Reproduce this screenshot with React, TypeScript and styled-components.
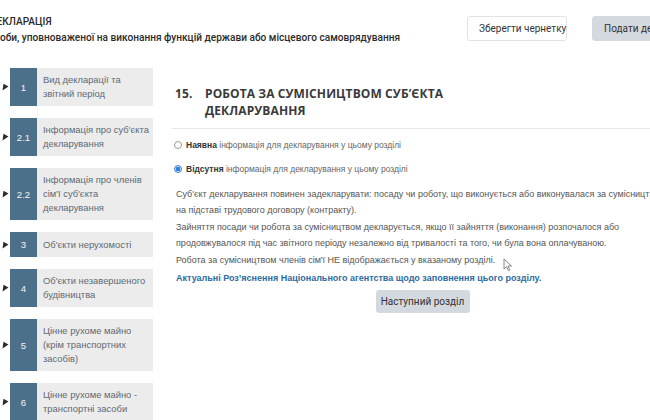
import React from "react";
import styled, { createGlobalStyle } from "styled-components";

const Global = createGlobalStyle`
  html, body { margin: 0; padding: 0; background: #fff; }
  body { width: 650px; height: 420px; overflow: hidden; font-family: "Liberation Sans", Arial, sans-serif; }
`;

const Page = styled.div`
  width: 650px;
  height: 420px;
  overflow: hidden;
  position: relative;
`;

const Header = styled.header`
  display: flex;
  align-items: center;
  height: 56px;
  width: 720px;
`;

const HeadTitle = styled.div`
  flex: 1;
  margin-left: -11px;
  font-family: Roboto, "Liberation Sans", sans-serif;
  font-weight: 500;
  color: #2b2b2b;
  font-size: 10.1px;
  line-height: 16px;
  padding-top: 4px;
  white-space: nowrap;
`;

const HeadActions = styled.div`
  display: flex;
  gap: 25px;
  align-items: center;
`;

const TopButton = styled.button<{ $primary?: boolean }>`
  height: 25px;
  padding: 0 11px;
  border-radius: 3px;
  font-family: Roboto, "Liberation Sans", sans-serif;
  font-size: 10px;
  color: #333;
  white-space: nowrap;
  border: 1px solid ${(p) => (p.$primary ? "#d3d9de" : "#e3e3e3")};
  background: ${(p) => (p.$primary ? "#d3d9de" : "#fff")};
  width: ${(p) => (p.$primary ? "128px" : "100px")};
  text-align: ${(p) => (p.$primary ? "left" : "center")};
`;

const Body = styled.div`
  display: flex;
  gap: 19px;
  margin-top: 12px;
`;

const Sidebar = styled.nav`
  width: 153px;
  display: flex;
  flex-direction: column;
  gap: 12px;
  flex-shrink: 0;
`;

const Item = styled.div`
  display: flex;
  align-items: stretch;
`;

const Marker = styled.div`
  width: 10px;
  display: flex;
  align-items: center;
  padding-left: 2px;
  box-sizing: border-box;
`;

const Num = styled.div`
  width: 27px;
  background: #4c7089;
  color: #f2f5f7;
  font-size: 9.6px;
  display: flex;
  align-items: center;
  justify-content: center;
`;

const Label = styled.div`
  flex: 1;
  background: #ececec;
  color: #5d6a74;
  font-size: 9.4px;
  line-height: 14px;
  padding: 5px 2px 5px 6px;
  min-height: 15px;
  display: flex;
  align-items: center;
`;

const Main = styled.main`
  width: 520px;
  flex-shrink: 0;
`;

const TitleRow = styled.div`
  display: flex;
  align-items: flex-start;
  justify-content: space-between;
  border-bottom: 1px solid #e6e6e6;
  padding: 19px 0 9px 3px;
  margin-top: -2px;
`;

const Title = styled.h2`
  margin: 0;
  display: flex;
  font-family: "Open Sans", sans-serif;
  font-weight: 700;
  font-size: 12px;
  line-height: 17px;
  color: #3a3a3a;
  letter-spacing: 0.1px;
`;

const TitleNum = styled.span`
  width: 30px;
  flex-shrink: 0;
`;

const SideButton = styled.div`
  width: 30px;
  height: 22px;
  margin-top: -9px;
  margin-right: 2px;
  border: 1px solid #e0e0e0;
  border-radius: 3px;
`;

const Radios = styled.div`
  display: flex;
  flex-direction: column;
  gap: 10px;
  margin-top: 9px;
  padding-left: 2px;
`;

const RadioRow = styled.label`
  display: flex;
  align-items: center;
  gap: 4px;
  font-size: 8.5px;
  color: #666;
  height: 14px;
`;

const RadioDot = styled.span<{ $checked?: boolean }>`
  width: 6px;
  height: 6px;
  border-radius: 50%;
  border: 1px solid ${(p) => (p.$checked ? "#3d85d6" : "#9a9a9a")};
  background: ${(p) => (p.$checked ? "radial-gradient(circle, #2f7fdc 0 2px, #cfe2f7 2.5px)" : "#fff")};
  flex-shrink: 0;
`;

const Strong = styled.b`
  color: #333;
  font-weight: 700;
`;

const Text = styled.div`
  margin-top: 11px;
  padding-left: 4px;
  font-size: 9px;
  line-height: 15.5px;
  color: #555;
  white-space: nowrap;
`;

const Para = styled.p`
  margin: 0 0 2px;
`;

const Link = styled.a`
  display: block;
  margin-top: 0;
  color: #2e6aa1;
  font-weight: 700;
  text-decoration: none;
`;

const Center = styled.div`
  width: 501px;
  display: flex;
  justify-content: center;
  margin-top: 4px;
`;

const NextButton = styled.button`
  background: #d3d9de;
  border: none;
  border-radius: 3px;
  height: 23px;
  width: 94px;
  padding: 0;
  white-space: nowrap;
  font-family: Roboto, "Liberation Sans", sans-serif;
  font-size: 10px;
  color: #333;
`;

const Cursor = styled.svg`
  position: absolute;
  left: 503px;
  top: 258px;
`;

const Arrow = () => (
  <svg width="7" height="8" viewBox="0 0 7 8">
    <path d="M0.5 7.5 L6.5 3.5 L1.5 0.8 Z" fill="#2b2b2b" />
  </svg>
);

const items: { n: string; label: string }[] = [
  { n: "1", label: "Вид декларації та звітний період" },
  { n: "2.1", label: "Інформація про суб'єкта декларування" },
  { n: "2.2", label: "Інформація про членів сім'ї суб'єкта декларування" },
  { n: "3", label: "Об'єкти нерухомості" },
  { n: "4", label: "Об'єкти незавершеного будівництва" },
  { n: "5", label: "Цінне рухоме майно (крім транспортних засобів)" },
  { n: "6", label: "Цінне рухоме майно - транспортні засоби" },
];

export default function App() {
  return (
    <Page>
      <Global />
      <Header>
        <HeadTitle>
          <div>ДЕКЛАРАЦІЯ</div>
          <div>особи, уповноваженої на виконання функцій держави або місцевого самоврядування</div>
        </HeadTitle>
        <HeadActions>
          <TopButton>Зберегти чернетку</TopButton>
          <TopButton $primary>Подати декларацію</TopButton>
        </HeadActions>
      </Header>
      <Body>
        <Sidebar>
          {items.map((it) => (
            <Item key={it.n}>
              <Marker>
                <Arrow />
              </Marker>
              <Num>{it.n}</Num>
              <Label>{it.label}</Label>
            </Item>
          ))}
        </Sidebar>
        <Main>
          <TitleRow>
            <Title>
              <TitleNum>15.</TitleNum>
              <span>
                РОБОТА ЗА СУМІСНИЦТВОМ СУБ’ЄКТА
                <br />
                ДЕКЛАРУВАННЯ
              </span>
            </Title>
            <SideButton />
          </TitleRow>
          <Radios>
            <RadioRow>
              <RadioDot />
              <span>
                <Strong>Наявна</Strong> інформація для декларування у цьому розділі
              </span>
            </RadioRow>
            <RadioRow>
              <RadioDot $checked />
              <span>
                <Strong>Відсутня</Strong> інформація для декларування у цьому розділі
              </span>
            </RadioRow>
          </Radios>
          <Text>
            <Para>
              Суб'єкт декларування повинен задекларувати: посаду чи роботу, що виконується або виконувалася за сумісництвом
              <br />
              на підставі трудового договору (контракту).
            </Para>
            <Para>
              Зайняття посади чи робота за сумісництвом декларується, якщо її зайняття (виконання) розпочалося або
              <br />
              продовжувалося під час звітного періоду незалежно від тривалості та того, чи була вона оплачуваною.
            </Para>
            <Para>Робота за сумісництвом членів сім'ї НЕ відображається у вказаному розділі.</Para>
            <Link>Актуальні Роз’яснення Національного агентства щодо заповнення цього розділу.</Link>
          </Text>
          <Center>
            <NextButton>Наступний розділ</NextButton>
          </Center>
        </Main>
      </Body>
      <Cursor width="10" height="14" viewBox="0 0 10 14">
        <path d="M1 1 L1 11 L3.5 8.6 L5.4 12.6 L6.8 12 L5 8 L8.5 8 Z" fill="#fff" stroke="#777" strokeWidth="0.9" />
      </Cursor>
    </Page>
  );
}
